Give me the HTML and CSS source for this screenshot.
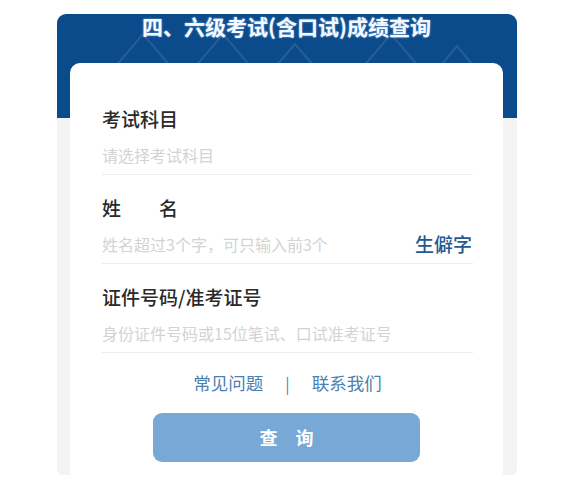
FILE: index.html
```html
<!DOCTYPE html>
<html lang="zh-CN">
<head>
<meta charset="utf-8">
<title>四、六级考试(含口试)成绩查询</title>
<link rel="stylesheet" href="styles.css">
</head>
<body>
<div class="panel">
  <svg class="pattern" width="460" height="104" viewBox="0 0 460 104" aria-hidden="true">
    <g fill="none" stroke="rgba(255,255,255,0.11)" stroke-width="2">
      <path d="M40 74 L86 20 L132 74"/>
      <path d="M120 74 L166 20 L212 74"/>
      <path d="M200 74 L238 30 L276 74"/>
      <path d="M288 74 L334 20 L380 74"/>
      <path d="M365 74 L400 32 L435 74"/>
    </g>
  </svg>
  <h1 class="title">四、六级考试(含口试)成绩查询</h1>
  <div class="card">
    <div class="field">
      <div class="label">考试科目</div>
      <div class="input-row"><span class="placeholder">请选择考试科目</span></div>
    </div>
    <div class="field">
      <div class="label">姓　　名</div>
      <div class="input-row"><span class="placeholder">姓名超过3个字，可只输入前3个</span><span class="rare">生僻字</span></div>
    </div>
    <div class="field">
      <div class="label">证件号码/准考证号</div>
      <div class="input-row"><span class="placeholder">身份证件号码或15位笔试、口试准考证号</span></div>
    </div>
    <div class="links">
      <a class="link">常见问题</a>
      <span class="sep">|</span>
      <a class="link">联系我们</a>
    </div>
    <button class="submit">查　询</button>
  </div>
</div>
</body>
</html>
```
FILE: styles.css
```css
* { box-sizing: border-box; }
html, body { margin: 0; padding: 0; background: #ffffff; }
body {
  font-family: "Noto Sans CJK SC", "Noto Sans", "Liberation Sans", sans-serif;
  padding-top: 14px;
}
.panel {
  position: relative;
  width: 460px;
  height: 461px;
  margin-left: 57px;
  border-radius: 9px 9px 6px 6px;
  background: linear-gradient(#0b4b8b 0, #0b4b8b 104px, #f3f3f4 104px, #f3f3f4 100%);
  padding: 0 14px 0 13px;
  display: flex;
  flex-direction: column;
}
.pattern {
  position: absolute;
  left: 0;
  top: 0;
}
.title {
  position: relative;
  margin: 0;
  height: 49px;
  padding-top: 0;
  line-height: 25px;
  text-align: center;
  color: #f4f9ff;
  font-size: 21px;
  font-weight: 700;
  text-shadow: 0 0 2px rgba(160, 205, 255, 0.8);
}
.card {
  position: relative;
  flex: 1;
  background: #ffffff;
  border-radius: 10px 10px 0 0;
  padding: 23px 30px 0 32px;
  display: flex;
  flex-direction: column;
}
.field {
  padding: 20px 0 7px;
  border-bottom: 1px solid #ececec;
}
.label {
  font-size: 19px;
  line-height: 26px;
  color: #2a2a2a;
  font-weight: 500;
}
.input-row {
  margin-top: 11px;
  height: 24px;
  display: flex;
  align-items: center;
  justify-content: space-between;
}
.placeholder {
  font-size: 16px;
  line-height: 24px;
  color: #d3d3d3;
}
.rare {
  font-size: 19px;
  line-height: 24px;
  color: #245a92;
  font-weight: 500;
  margin-right: 1px;
}
.links {
  margin-top: 18px;
  height: 24px;
  display: flex;
  justify-content: center;
  align-items: center;
  gap: 22px;
  font-size: 17.5px;
  line-height: 24px;
  color: #4b7fb1;
}
.sep { color: #4b7fb1; font-size: 16px; }
.submit {
  margin: 18px 0 0 51px;
  width: 267px;
  height: 49px;
  border: none;
  border-radius: 9px;
  background: #78a8d5;
  color: #ffffff;
  font-family: inherit;
  font-size: 18px;
  font-weight: 700;
  line-height: 49px;
  padding: 0;
}
```
